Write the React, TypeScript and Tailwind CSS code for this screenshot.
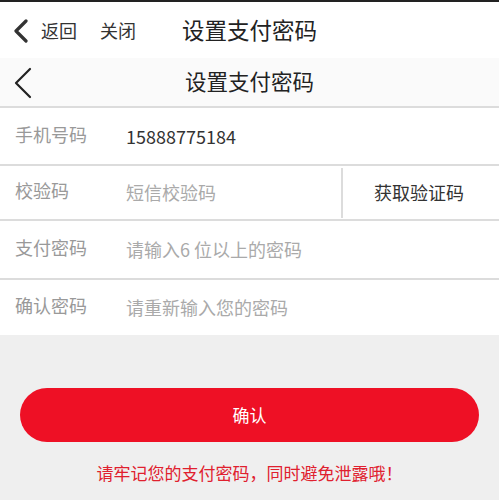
import React from 'react';

const Chevron = ({ thick }: { thick?: boolean }) => (
  <svg
    width={thick ? 16 : 20}
    height={thick ? 24 : 32}
    viewBox={thick ? '0 0 16 24' : '0 0 20 32'}
    fill="none"
    stroke={thick ? '#333' : '#222'}
    strokeWidth={thick ? 3.2 : 2.2}
    strokeLinecap="round"
    strokeLinejoin="round"
  >
    {thick ? <path d="M13 2 L3 12 L13 22" /> : <path d="M17 2 L3 16 L17 30" />}
  </svg>
);

const Row = ({
  label,
  value,
  placeholder,
  height,
  extra,
}: {
  label: string;
  value?: string;
  placeholder?: string;
  height: string;
  extra?: React.ReactNode;
}) => (
  <div className={`flex items-center bg-white border-b-2 border-[#dcdcdc] ${height}`}>
    <span className="w-[126px] pl-[15px] text-[18px] text-[#999] -mt-[4px]">{label}</span>
    <span className={`flex-1 text-[18px] ${value ? 'text-[#333]' : 'text-[#aaa]'}`}>{value ?? placeholder}</span>
    {extra}
  </div>
);

export default function App() {
  return (
    <div className="w-[499px] h-[500px] overflow-hidden bg-[#efefef] font-['Noto_Sans_CJK_SC',sans-serif]">
      <div className="h-[58px] bg-white border-t-2 border-[#222] flex items-center">
        <div className="pl-[13px] pt-[1px]">
          <Chevron thick />
        </div>
        <span className="ml-[12px] text-[18px] text-[#333]">返回</span>
        <span className="ml-[23px] text-[18px] text-[#333]">关闭</span>
        <span className="ml-[46px] text-[22.5px] text-[#222]">设置支付密码</span>
      </div>
      <div className="h-[50px] bg-[#fafafa] border-b-2 border-[#dcdcdc] flex items-center relative">
        <div className="pl-[13px] pt-[2px]">
          <Chevron />
        </div>
        <span className="absolute left-0 right-0 text-center text-[21.5px] text-[#222] -mt-[2px]">设置支付密码</span>
      </div>
      <Row label="手机号码" value="15888775184" height="h-[58px]" />
      <Row
        label="校验码"
        placeholder="短信校验码"
        height="h-[55px]"
        extra={
          <div className="w-[158px] h-[50px] border-l-2 border-[#dcdcdc] flex items-center justify-center text-[18px] text-[#333] pr-[4px]">
            获取验证码
          </div>
        }
      />
      <Row label="支付密码" placeholder="请输入6 位以上的密码" height="h-[59px]" />
      <div className="flex items-center bg-white h-[55px]">
        <span className="w-[126px] pl-[15px] text-[18px] text-[#999] -mt-[4px]">确认密码</span>
        <span className="flex-1 text-[18px] text-[#aaa]">请重新输入您的密码</span>
      </div>
      <div className="px-[20px] pt-[53px]">
        <button className="w-full h-[54px] rounded-full bg-[#ee1025] text-white text-[17px]">确认</button>
        <p className="mt-[18px] text-center text-[17px] text-[#e0202e]">请牢记您的支付密码，同时避免泄露哦！</p>
      </div>
    </div>
  );
}
